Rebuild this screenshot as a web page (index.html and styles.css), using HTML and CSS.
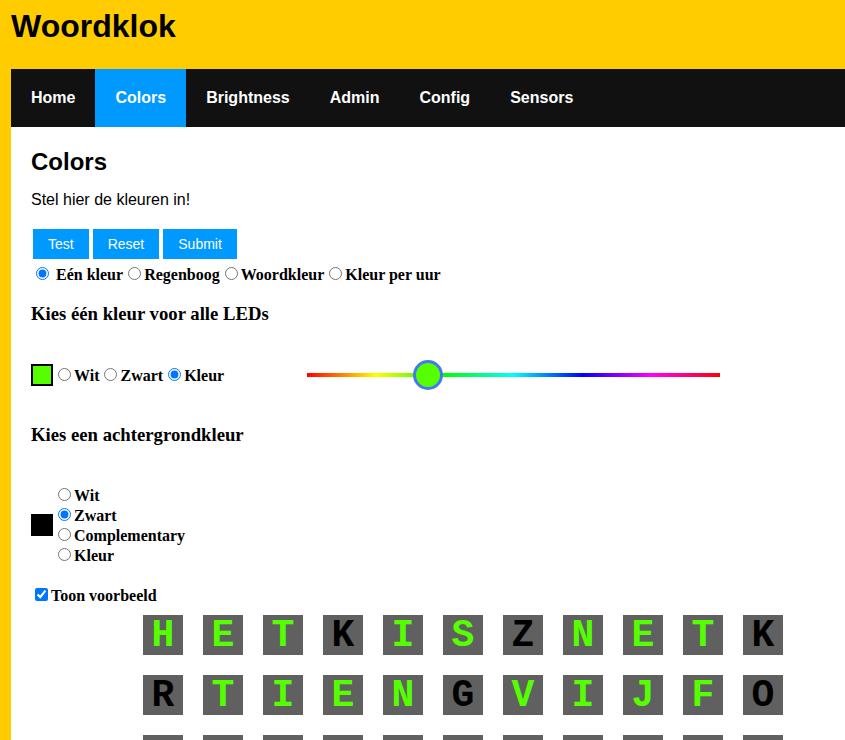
FILE: index.html
```html
<!DOCTYPE html>
<html lang="nl">
<head>
<meta charset="utf-8">
<title>Woordklok</title>
<link rel="stylesheet" href="styles.css">
</head>
<body>
<header class="top"><h1 class="title">Woordklok</h1></header>
<nav class="menu">
  <a class="item">Home</a><a class="item active">Colors</a><a class="item">Brightness</a><a class="item">Admin</a><a class="item">Config</a><a class="item">Sensors</a>
</nav>
<main class="page">
  <h2 class="heading">Colors</h2>
  <p class="intro">Stel hier de kleuren in!</p>
  <div class="actions"><button class="btn">Test</button><button class="btn">Reset</button><button class="btn">Submit</button></div>
  <div class="modes"><input type="radio" name="mode" checked> Eén kleur<input type="radio" name="mode">Regenboog<input type="radio" name="mode">Woordkleur<input type="radio" name="mode">Kleur per uur</div>

  <h3 class="sub">Kies één kleur voor alle LEDs</h3>
  <div class="ledrow">
    <span class="swatch swatch-green"></span>
    <div class="opts"><input type="radio" name="fg">Wit<input type="radio" name="fg">Zwart<input type="radio" name="fg" checked>Kleur</div>
    <input type="range" class="hue" min="0" max="360" value="100">
  </div>

  <h3 class="sub sub-bg">Kies een achtergrondkleur</h3>
  <div class="bgrow">
    <span class="swatch swatch-black"></span>
    <div class="stack"><input type="radio" name="bg">Wit<br><input type="radio" name="bg" checked>Zwart<br><input type="radio" name="bg">Complementary<br><input type="radio" name="bg">Kleur</div>
  </div>

  <div class="preview"><input type="checkbox" checked>Toon voorbeeld</div>

  <div class="clock">
    <span class="cell on">H</span><span class="cell on">E</span><span class="cell on">T</span><span class="cell">K</span><span class="cell on">I</span><span class="cell on">S</span><span class="cell">Z</span><span class="cell on">N</span><span class="cell on">E</span><span class="cell on">T</span><span class="cell">K</span>
    <span class="cell">R</span><span class="cell on">T</span><span class="cell on">I</span><span class="cell on">E</span><span class="cell on">N</span><span class="cell">G</span><span class="cell on">V</span><span class="cell on">I</span><span class="cell on">J</span><span class="cell on">F</span><span class="cell">O</span>
    <span class="cell">K</span><span class="cell">W</span><span class="cell">A</span><span class="cell">R</span><span class="cell">T</span><span class="cell">V</span><span class="cell">O</span><span class="cell">O</span><span class="cell">R</span><span class="cell">S</span><span class="cell">M</span>
  </div>
</main>
</body>
</html>
```

FILE: styles.css
```css
html, body {
  margin: 0;
  padding: 0;
}

body {
  background: #ffcc00;
  padding-left: 11px;
  font-family: "Liberation Serif", "Times New Roman", serif;
  font-size: 16px;
  color: #000;
}

.top {
  padding-top: 8px;
}

.title {
  margin: 0;
  font-family: "Liberation Sans", Arial, sans-serif;
  font-size: 32px;
  font-weight: bold;
  line-height: 37px;
}

.menu {
  margin-top: 24px;
  display: flex;
  background: #111111;
}

.item {
  display: block;
  padding: 20px;
  line-height: 18px;
  font-family: "Liberation Sans", Arial, sans-serif;
  font-size: 16px;
  font-weight: bold;
  color: #ffffff;
  text-decoration: none;
}

.item.active {
  background: #0099ff;
}

.page {
  background: #ffffff;
  padding: 21px 20px 40px;
}

.heading {
  margin: 0;
  font-family: "Liberation Sans", Arial, sans-serif;
  font-size: 24px;
  font-weight: bold;
  line-height: 28px;
}

.intro {
  margin: 15px 0 0;
  font-family: "Liberation Sans", Arial, sans-serif;
  font-size: 16px;
  line-height: 18px;
}

.actions {
  margin-top: 20px;
  margin-left: 2px;
  display: flex;
  gap: 4px;
}

.btn {
  height: 30px;
  padding: 0 15px;
  border: none;
  background: #0099ff;
  color: #ffffff;
  font-family: "Liberation Sans", Arial, sans-serif;
  font-size: 14px;
}

.modes {
  margin-top: 5px;
  font-weight: bold;
}

input[type="radio"] {
  margin: 3px 3px 0 5px;
}

.sub {
  margin: 19px 0 0;
  font-size: 18.72px;
  line-height: 21px;
  font-weight: bold;
}

.ledrow {
  margin-top: 36px;
  height: 30px;
  display: flex;
  align-items: center;
  font-weight: bold;
}

.swatch {
  display: block;
  width: 22px;
  height: 22px;
  box-sizing: border-box;
  flex: none;
}

.swatch-green {
  background: #55ff00;
  border: 2px solid #000000;
}

.swatch-black {
  background: #000000;
}

.opts {
  width: 254px;
  flex: none;
}

.hue {
  -webkit-appearance: none;
  appearance: none;
  width: 413px;
  height: 4px;
  margin: 0;
  padding: 0;
  outline: none;
  background: linear-gradient(to right, #ff0000 0%, #ffff00 16.67%, #00ff00 33.33%, #00ffff 50%, #0000ff 66.67%, #ff00ff 83.33%, #ff0000 100%);
}

.hue::-webkit-slider-thumb {
  -webkit-appearance: none;
  appearance: none;
  width: 30px;
  height: 30px;
  box-sizing: border-box;
  border-radius: 50%;
  background: #55ff00;
  border: 3px solid #4479f2;
}

.sub-bg {
  margin-top: 34px;
}

.bgrow {
  margin-top: 40px;
  display: flex;
  align-items: center;
  font-weight: bold;
}

.preview {
  margin-top: 20px;
  font-weight: bold;
}

.preview input {
  margin: 3px 3px 3px 4px;
}

.clock {
  margin-top: 10px;
  margin-left: 112px;
  display: grid;
  grid-template-columns: repeat(11, 40px);
  gap: 20px;
}

.cell {
  width: 40px;
  height: 40px;
  background: #606060;
  display: flex;
  align-items: center;
  justify-content: center;
  font-family: "Liberation Mono", "DejaVu Sans Mono", monospace;
  font-size: 38px;
  font-weight: bold;
  color: #000000;
}

.cell.on {
  color: #55ff00;
}
```
